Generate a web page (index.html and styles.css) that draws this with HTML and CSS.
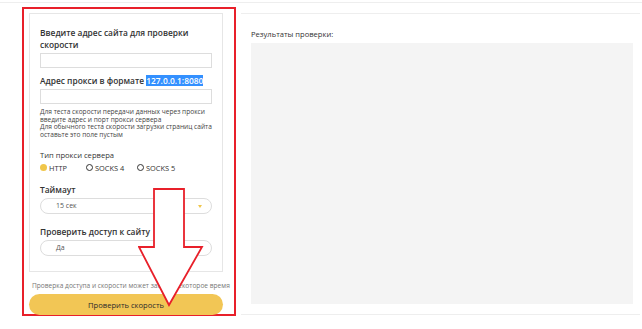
FILE: index.html
```html
<!DOCTYPE html>
<html lang="ru">
<head>
    <meta charset="UTF-8">
    <meta name="viewport" content="width=device-width, initial-scale=1.0">
    <title>Проверка скорости сайта</title>
    <link rel="stylesheet" href="styles.css">
</head>
<body>

<div class="topline"></div>

<div class="page">
    <div class="left-col">
        <div class="card">
            <div class="field-label">Введите адрес сайта для проверки скорости</div>
            <input type="text" class="field-input">

            <div class="field-label">Адрес прокси в формате <span class="selected">127.0.0.1:8080</span></div>
            <input type="text" class="field-input">
            <div class="help">
                Для теста скорости передачи данных через прокси<br>
                введите адрес и порт прокси сервера<br>
                Для обычного теста скорости загрузки страниц сайта<br>
                оставьте это поле пустым
            </div>

            <div class="small-label">Тип прокси сервера</div>
            <div class="radios">
                <span class="radio checked"><i></i>HTTP</span>
                <span class="radio"><i></i>SOCKS 4</span>
                <span class="radio"><i></i>SOCKS 5</span>
            </div>

            <div class="field-label">Таймаут</div>
            <div class="select">15 сек<b></b></div>

            <div class="field-label">Проверить доступ к сайту</div>
            <div class="select">Да<b></b></div>
        </div>

        <div class="note">Проверка доступа и скорости может занять некоторое время</div>
        <button class="btn">Проверить скорость</button>
    </div>

    <div class="right-col">
        <div class="result-title">Результаты проверки:</div>
        <div class="result-box"></div>
    </div>
</div>

<!-- стрелка поверх формы -->
<svg class="arrow" width="70" height="125" viewBox="0 0 70 125">
    <polygon points="16,1 46,1 46,59 64,59 31,117 1,59 16,59" fill="#fff" stroke="#e8202a" stroke-width="1.8"/>
</svg>

</body>
</html>
```

FILE: styles.css
```css
body {
    font-family: "Open Sans", Arial, sans-serif;
    background-color: #fff;
    color: #333;
    margin: 0;
    position: relative;
}
.topline {
    height: 2px;
    border-bottom: 1px solid #eee;
}
.page {
    display: flex;
    align-items: flex-start;
}
.left-col {
    margin-left: 22px;
    margin-top: 4px;
    width: 214px;
    height: 309px;
    border: 2px solid #e8202a;
    padding: 4px 0 0 5px;
    box-sizing: border-box;
}
.card {
    width: 194px;
    height: 259px;
    border: 1px solid #e6e6e6;
    box-sizing: border-box;
    padding: 13px 10px 0 10px;
}
.field-label {
    font-size: 8.4px;
    font-weight: 600;
    line-height: 12px;
    color: #333;
}
.selected {
    background-color: #3390ff;
    color: #fff;
}
.field-input {
    display: block;
    width: 172px;
    height: 15px;
    border: 1px solid #ddd;
    box-sizing: border-box;
    margin: 2px 0 7px 0;
    padding: 0;
}
.help {
    font-size: 6.6px;
    line-height: 7.7px;
    color: #444;
    margin-top: -3px;
    margin-bottom: 11px;
}
.small-label {
    font-size: 7.6px;
    line-height: 10px;
    color: #333;
}
.radios {
    display: flex;
    margin-top: 3px;
    margin-bottom: 11px;
    font-size: 7.4px;
    line-height: 10px;
}
.radio {
    display: flex;
    align-items: center;
    width: 51px;
    color: #333;
}
.radio:first-child {
    width: 46px;
}
.radio i {
    display: inline-block;
    width: 5px;
    height: 5px;
    border: 1px solid #333;
    border-radius: 50%;
    margin-right: 2px;
}
.radio.checked i {
    width: 7px;
    height: 7px;
    border: none;
    background-color: #f0c64a;
}
.select {
    position: relative;
    width: 172px;
    height: 16px;
    border: 1px solid #ddd;
    border-radius: 8px;
    box-sizing: border-box;
    font-size: 7px;
    line-height: 14px;
    color: #555;
    padding-left: 15px;
    margin: 2px 0 12px 0;
}
.select b {
    position: absolute;
    right: 9px;
    top: 6px;
    border-left: 2px solid transparent;
    border-right: 2px solid transparent;
    border-top: 3px solid #f0c64a;
}
.note {
    font-size: 6.6px;
    line-height: 10px;
    color: #777;
    margin-top: 9px;
    margin-left: 3px;
    white-space: nowrap;
}
.btn {
    display: block;
    width: 194px;
    height: 21px;
    margin-top: 3px;
    border: none;
    border-radius: 11px;
    background-color: #f2c655;
    color: #2a2a2a;
    font-family: "Open Sans", Arial, sans-serif;
    font-size: 7.6px;
    cursor: pointer;
}
.right-col {
    margin-top: 10px;
    margin-left: 5px;
    width: 399px;
    height: 302px;
    border-top: 1px solid #eee;
    border-bottom: 1px solid #eee;
    box-sizing: border-box;
    padding: 14px 7px 0 10px;
}
.result-title {
    font-size: 7.6px;
    line-height: 12px;
    color: #333;
}
.result-box {
    height: 261px;
    background-color: #f4f4f4;
    margin-top: 3px;
}
.arrow {
    position: absolute;
    left: 138px;
    top: 188px;
}
```
